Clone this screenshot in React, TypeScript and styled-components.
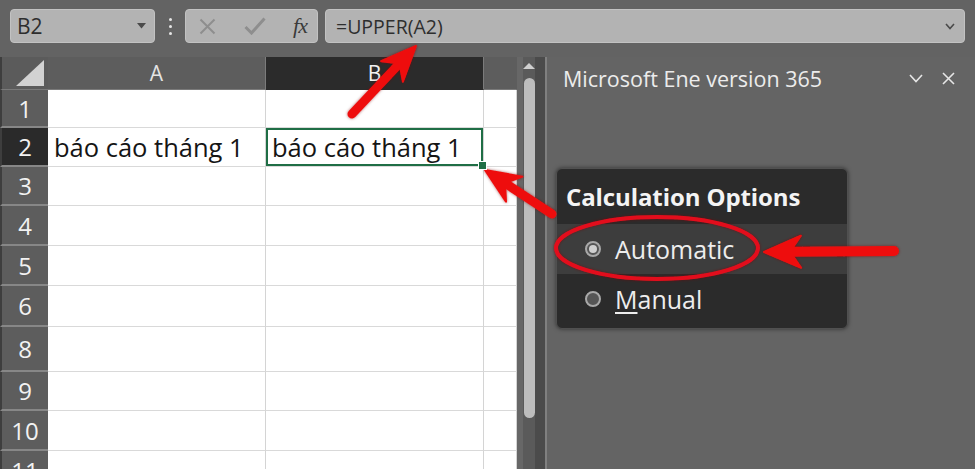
import React from "react";
import styled, { createGlobalStyle } from "styled-components";

const GlobalStyle = createGlobalStyle`
  html, body {
    margin: 0;
    padding: 0;
    background: #636363;
  }
  body {
    font-family: "Open Sans", "Noto Sans", "Liberation Sans", sans-serif;
    overflow: hidden;
  }
`;

const Screen = styled.div`
  position: relative;
  width: 975px;
  height: 469px;
  overflow: hidden;
  background: #636363;
  display: flex;
  flex-direction: column;
`;

/* ---------- formula toolbar ---------- */

const Toolbar = styled.div`
  height: 57px;
  flex: none;
  box-sizing: border-box;
  padding: 9px 10px 14px 10px;
  display: flex;
  align-items: stretch;
`;

const Field = styled.div`
  box-sizing: border-box;
  background: #b3b3b3;
  border: 1px solid #c2c2c2;
  border-radius: 4px;
  display: flex;
  align-items: center;
  color: #2e2e2e;
`;

const NameBox = styled(Field)`
  width: 145px;
  padding: 0 8px 0 6px;
  justify-content: space-between;
  font-size: 21px;
`;

const Grip = styled.div`
  width: 30px;
  display: flex;
  flex-direction: column;
  align-items: center;
  justify-content: center;
  gap: 4px;
`;

const GripDot = styled.span`
  width: 3px;
  height: 3px;
  border-radius: 50%;
  background: #e6e6e6;
`;

const FuncBox = styled(Field)`
  width: 133px;
  padding: 0 10px 0 13px;
  justify-content: space-between;
  margin-right: 7px;
`;

const Fx = styled.span`
  font-family: "Liberation Serif", "DejaVu Serif", serif;
  font-style: italic;
  font-size: 22px;
  color: #3a3a3a;
  letter-spacing: -1px;
`;

const FormulaBox = styled(Field)`
  flex: 1;
  padding: 0 9px 0 10px;
  justify-content: space-between;
  font-size: 19.5px;
`;

/* ---------- main area ---------- */

const Main = styled.div`
  flex: 1;
  min-height: 0;
  display: flex;
`;

const Sheet = styled.div`
  width: 517px;
  flex: none;
  display: grid;
  grid-template-columns: 48px 218px 218px 33px;
  grid-template-rows: 33px 38px 39px 39px 40px 40px 41px 45px 39px 40px 40px;
  overflow: hidden;
  align-content: start;
`;

const Corner = styled.div`
  background: #5b5b5b;
  border-left: 2px solid #3e3e3e;
  border-bottom: 1px solid #7a7a7a;
  position: relative;
`;

const ColHead = styled.div<{ $active?: boolean; $empty?: boolean }>`
  background: ${(p) => (p.$active ? "#2b2b2b" : "#5d5d5d")};
  color: ${(p) => (p.$active ? "#f2f2f2" : "#e4e4e4")};
  border-right: 1px solid ${(p) => (p.$empty ? "transparent" : "#7b7b7b")};
  border-bottom: 1px solid ${(p) => (p.$active ? "#2b2b2b" : "#7a7a7a")};
  display: flex;
  align-items: center;
  justify-content: center;
  font-size: 21px;
`;

const RowHead = styled.div<{ $active?: boolean }>`
  background: ${(p) => (p.$active ? "#2a2a2a" : "#5d5d5d")};
  color: #f2f2f2;
  border-left: 2px solid #3e3e3e;
  border-bottom: 2px solid #878787;
  box-sizing: border-box;
  display: flex;
  align-items: center;
  justify-content: center;
  font-size: 24px;
`;

const Cell = styled.div<{ $selected?: boolean }>`
  position: relative;
  background: #ffffff;
  border-right: 1px solid #d4d4d4;
  border-bottom: 1px solid #d9d9d9;
  box-sizing: border-box;
  display: flex;
  align-items: center;
  padding-left: 6px;
  font-size: 25.5px;
  color: #151515;
  white-space: nowrap;
  box-shadow: ${(p) => (p.$selected ? "inset 0 0 0 2px #1f6e45" : "none")};
`;

const FillHandle = styled.span`
  position: absolute;
  right: -4px;
  bottom: -4px;
  width: 7px;
  height: 7px;
  background: #1f6e45;
  border: 1px solid #ffffff;
  z-index: 2;
`;

const ScrollCol = styled.div`
  width: 28px;
  flex: none;
  display: flex;
  background: linear-gradient(
    to right,
    #676767 0px,
    #676767 6px,
    #5a5a5a 6px,
    #5a5a5a 18px,
    #4b4b4b 18px
  );
`;

const ScrollTrack = styled.div`
  margin-left: 6px;
  width: 12px;
  display: flex;
  flex-direction: column;
  align-items: center;
`;

const ScrollArrow = styled.div`
  margin-top: 6px;
  width: 0;
  height: 0;
  border-left: 6px solid transparent;
  border-right: 6px solid transparent;
  border-bottom: 6px solid #cfcfcf;
`;

const ScrollThumb = styled.div`
  margin-top: 9px;
  width: 11px;
  height: 340px;
  border-radius: 6px;
  background: #bdbdbd;
`;

/* ---------- side pane ---------- */

const Pane = styled.div`
  flex: 1;
  border-left: 2px solid #808080;
  background: #646464;
  padding: 6px 20px 0 9px;
  display: flex;
  flex-direction: column;
  align-items: flex-start;
`;

const PaneHeader = styled.div`
  align-self: stretch;
  display: flex;
  align-items: center;
  justify-content: space-between;
  height: 30px;
  padding-left: 7px;
`;

const PaneTitle = styled.span`
  color: #ececec;
  font-size: 21.5px;
`;

const PaneTools = styled.div`
  display: flex;
  align-items: center;
  gap: 19px;
`;

const Menu = styled.div`
  margin-top: 75px;
  width: 292px;
  height: 161px;
  box-sizing: border-box;
  background: #2b2b2b;
  border: 1px solid #505050;
  border-radius: 6px;
  box-shadow: 0 0 4px rgba(0, 0, 0, 0.5);
  display: flex;
  flex-direction: column;
  overflow: hidden;
`;

const MenuTitle = styled.div`
  height: 55px;
  flex: none;
  display: flex;
  align-items: center;
  padding-left: 9px;
  color: #f4f4f4;
  font-weight: 700;
  font-size: 24px;
  letter-spacing: -0.1px;
`;

const MenuItem = styled.div<{ $hover?: boolean }>`
  height: 50px;
  flex: none;
  display: flex;
  align-items: center;
  gap: 14px;
  padding-left: 28px;
  background: ${(p) => (p.$hover ? "#3d3d3d" : "transparent")};
  color: #ededed;
  font-size: 25px;
`;

const Radio = styled.span<{ $on?: boolean }>`
  width: 16px;
  height: 16px;
  box-sizing: border-box;
  border-radius: 50%;
  border: 2px solid #a8a8a8;
  background: #555555;
  display: flex;
  align-items: center;
  justify-content: center;
  &::after {
    content: "";
    width: 8px;
    height: 8px;
    border-radius: 50%;
    background: ${(p) => (p.$on ? "#cfcfcf" : "transparent")};
  }
`;

const AccessKey = styled.span`
  text-decoration: underline;
  text-underline-offset: 3px;
`;

/* ---------- annotation layer ---------- */

const Annotations = styled.svg`
  position: absolute;
  left: 0;
  top: 0;
  width: 975px;
  height: 469px;
  pointer-events: none;
`;

type Pt = [number, number];

function Arrow({ tail, tip, shaft, headW, headL }: { tail: Pt; tip: Pt; shaft: number; headW: number; headL: number }) {
  const dx = tip[0] - tail[0];
  const dy = tip[1] - tail[1];
  const len = Math.hypot(dx, dy);
  const ux = dx / len;
  const uy = dy / len;
  const nx = -uy;
  const ny = ux;
  const bx = tip[0] - ux * headL;
  const by = tip[1] - uy * headL;
  const back = 5;
  const pts: Pt[] = [
    tip,
    [bx - ux * back + nx * headW / 2, by - uy * back + ny * headW / 2],
    [bx + ux * 6, by + uy * 6],
    [bx - ux * back - nx * headW / 2, by - uy * back - ny * headW / 2],
  ];
  return (
    <g>
      <line
        x1={tail[0]}
        y1={tail[1]}
        x2={bx + ux * 8}
        y2={by + uy * 8}
        stroke="#ee1111"
        strokeWidth={shaft}
        strokeLinecap="round"
      />
      <polygon points={pts.map((p) => p.join(",")).join(" ")} fill="#ee1111" strokeLinejoin="round" stroke="#ee1111" strokeWidth={2} />
    </g>
  );
}

const rowNumbers = [1, 2, 3, 4, 5, 6, 8, 9, 10, 11];

export default function App() {
  return (
    <>
      <GlobalStyle />
      <Screen>
        <Toolbar>
          <NameBox>
            <span>B2</span>
            <svg width="9" height="6" viewBox="0 0 9 6">
              <path d="M0 0 H9 L4.5 5.5 Z" fill="#4a4a4a" />
            </svg>
          </NameBox>
          <Grip>
            <GripDot />
            <GripDot />
            <GripDot />
          </Grip>
          <FuncBox>
            <svg width="17" height="17" viewBox="0 0 17 17">
              <path d="M1.5 1.5 L15.5 15.5 M15.5 1.5 L1.5 15.5" stroke="#8e8e8e" strokeWidth="2" />
            </svg>
            <svg width="22" height="18" viewBox="0 0 22 18">
              <path d="M1.5 10 L7.5 16 L20.5 1.5" stroke="#8e8e8e" strokeWidth="3" fill="none" />
            </svg>
            <Fx>fx</Fx>
          </FuncBox>
          <FormulaBox>
            <span>=UPPER(A2)</span>
            <svg width="10" height="7" viewBox="0 0 10 7">
              <path d="M1 1 L5 5.5 L9 1" stroke="#4a4a4a" strokeWidth="1.6" fill="none" />
            </svg>
          </FormulaBox>
        </Toolbar>

        <Main>
          <Sheet>
            <Corner>
              <svg width="46" height="32" viewBox="0 0 46 32" style={{ position: "absolute", left: 0, top: 0 }}>
                <path d="M14 29 L42 29 L42 3 Z" fill="#d2d2d2" />
              </svg>
            </Corner>
            <ColHead>A</ColHead>
            <ColHead $active>B</ColHead>
            <ColHead $empty />

            {rowNumbers.map((n) => (
              <React.Fragment key={n}>
                <RowHead $active={n === 2}>{n}</RowHead>
                <Cell>{n === 2 ? "báo cáo tháng 1" : null}</Cell>
                <Cell $selected={n === 2}>
                  {n === 2 ? "báo cáo tháng 1" : null}
                  {n === 2 ? <FillHandle /> : null}
                </Cell>
                <Cell />
              </React.Fragment>
            ))}
          </Sheet>

          <ScrollCol>
            <ScrollTrack>
              <ScrollArrow />
              <ScrollThumb />
            </ScrollTrack>
          </ScrollCol>

          <Pane>
            <PaneHeader>
              <PaneTitle>Microsoft Ene version 365</PaneTitle>
              <PaneTools>
                <svg width="14" height="9" viewBox="0 0 14 9">
                  <path d="M1 1 L7 7.5 L13 1" stroke="#e6e6e6" strokeWidth="1.6" fill="none" />
                </svg>
                <svg width="13" height="13" viewBox="0 0 13 13">
                  <path d="M1 1 L12 12 M12 1 L1 12" stroke="#e6e6e6" strokeWidth="1.6" />
                </svg>
              </PaneTools>
            </PaneHeader>

            <Menu>
              <MenuTitle>Calculation Options</MenuTitle>
              <MenuItem $hover>
                <Radio $on />
                <span>Automatic</span>
              </MenuItem>
              <MenuItem>
                <Radio />
                <span>
                  <AccessKey>M</AccessKey>anual
                </span>
              </MenuItem>
            </Menu>
          </Pane>
        </Main>

        <Annotations viewBox="0 0 975 469">
          <defs>
            <filter id="glow" x="-20%" y="-20%" width="140%" height="140%">
              <feGaussianBlur in="SourceAlpha" stdDeviation="1.5" result="b" />
              <feFlood floodColor="#7a0000" floodOpacity="0.6" />
              <feComposite in2="b" operator="in" result="s" />
              <feMerge>
                <feMergeNode in="s" />
                <feMergeNode in="SourceGraphic" />
              </feMerge>
            </filter>
          </defs>
          <g filter="url(#glow)">
            <Arrow tail={[352, 114]} tip={[416, 46]} shaft={9} headW={30} headL={30} />
            <Arrow tail={[552, 214]} tip={[485, 170]} shaft={9} headW={30} headL={30} />
            <Arrow tail={[894, 251]} tip={[764, 252]} shaft={10} headW={32} headL={32} />
            <ellipse cx={657} cy={248} rx={101} ry={31} fill="none" stroke="#e3101c" strokeWidth={4} />
          </g>
        </Annotations>
      </Screen>
    </>
  );
}
